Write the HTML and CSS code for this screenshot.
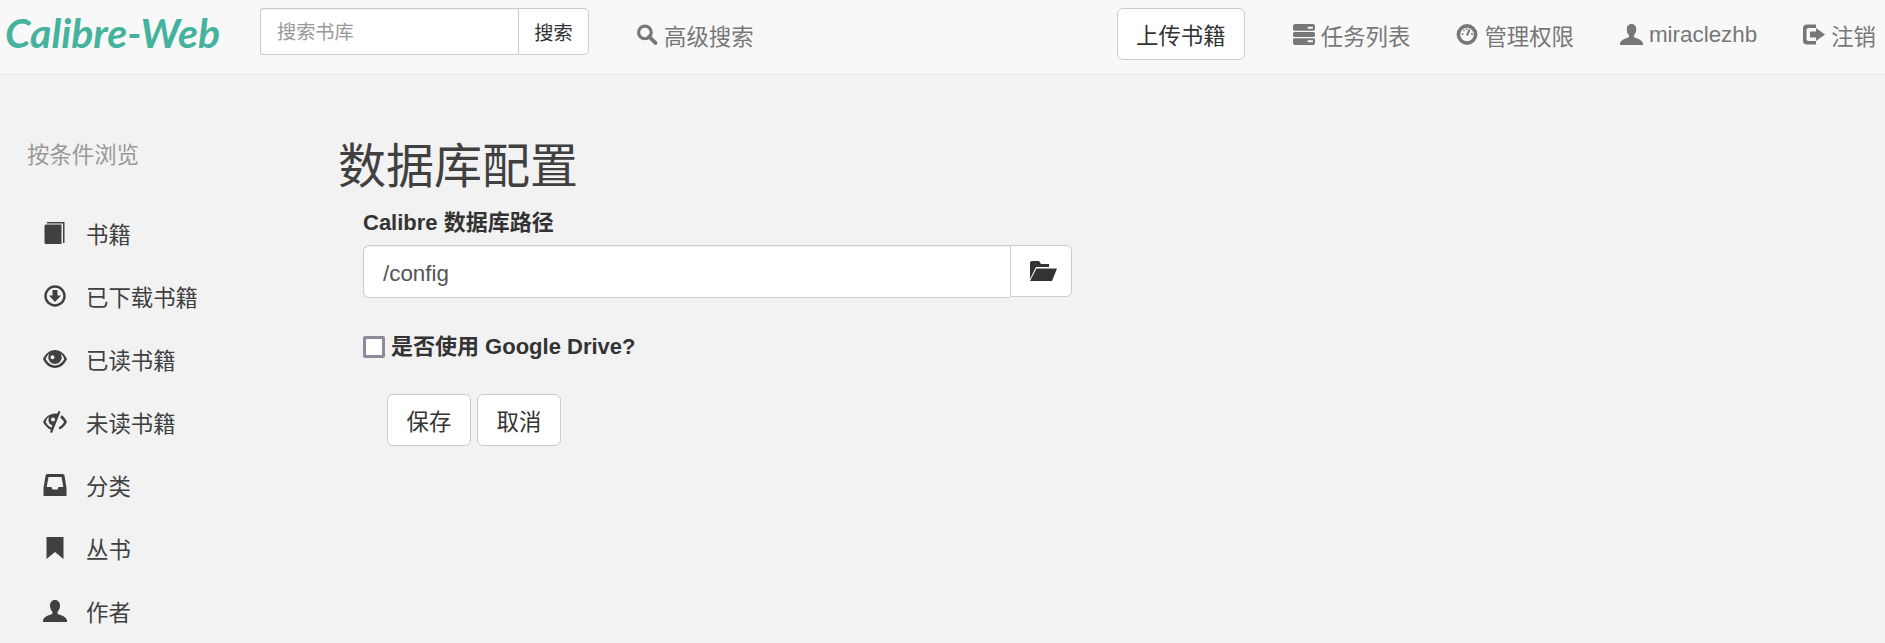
FILE: index.html
```html
<!DOCTYPE html>
<html lang="zh-CN">
<head>
    <meta charset="UTF-8">
    <title>Calibre-Web | 数据库配置</title>
    <link rel="stylesheet" href="styles.css">
</head>
<body>
    <header class="navbar">
        <a class="logo">Calibre-Web</a>
        <form class="search">
            <input class="search-input" type="text" placeholder="搜索书库">
            <button class="search-btn" type="button">搜索</button>
        </form>
        <a class="nav-link adv-search">
            <svg class="icon" viewBox="0 0 20 20"><circle cx="8" cy="8" r="6" fill="none" stroke="currentColor" stroke-width="3"/><path d="M12 12l6 6" stroke="currentColor" stroke-width="3.6" stroke-linecap="round"/></svg>
            高级搜索
        </a>
        <button class="upload-btn" type="button">上传书籍</button>
        <a class="nav-link">
            <svg class="icon" viewBox="0 0 21 20"><path fill="currentColor" d="M2 0h17a2 2 0 0 1 2 2v3a2 2 0 0 1-2 2H2a2 2 0 0 1-2-2V2a2 2 0 0 1 2-2zM2 7.500h17a1.500 1.500 0 0 1 0 5H2a1.500 1.500 0 0 1 0-5zM2 13h17a2 2 0 0 1 2 2v3a2 2 0 0 1-2 2H2a2 2 0 0 1-2-2v-3a2 2 0 0 1 2-2z"/><path fill="#f8f8f8" d="M0 6.500h21v1H0zM0 12.500h21v1H0zM14 2.500h5v2h-5zM14 15.500h5v2h-5z"/></svg>
            任务列表
        </a>
        <a class="nav-link">
            <svg class="icon" viewBox="0 0 21 21"><circle cx="10.500" cy="10.500" r="8.600" fill="none" stroke="currentColor" stroke-width="3.600"/><path d="M10.500 11.500l2.500-6" stroke="currentColor" stroke-width="2"/><path d="M5 10h2M14.500 10h2M7 6l1 1M10 4.500v1.500" stroke="currentColor" stroke-width="1.400"/></svg>
            管理权限
        </a>
        <a class="nav-link">
            <svg class="icon icon-user" viewBox="0 0 24 22"><path fill="currentColor" d="M12 0c3.300 0 5 2.500 5 5.500 0 2.600-1 4.800-2.400 6.200v2c2 1.200 8 2.300 9.400 6.300v2H0v-2c1.400-4 7.400-5.100 9.400-6.300v-2C8 10.300 7 8.100 7 5.500 7 2.500 8.700 0 12 0z"/></svg>
            miraclezhb
        </a>
        <a class="nav-link">
            <svg class="icon" viewBox="0 0 22 20"><path fill="currentColor" d="M4 0h9v3.500H5.500a2 2 0 0 0-2 2v9a2 2 0 0 0 2 2H13V20H4a4 4 0 0 1-4-4V4a4 4 0 0 1 4-4z"/><path fill="currentColor" d="M13 3.500l9 6.500-9 6.500V13H7V7h6z"/></svg>
            注销
        </a>
    </header>

    <div class="page">
        <nav class="sidebar">
            <div class="side-title">按条件浏览</div>
            <a class="side-item">
                <svg class="side-icon" viewBox="0 0 24 22"><path fill="currentColor" d="M1.500 4c0-1 1-1.500 2-1.500h15V22h-15c-1 0-2-.5-2-1.500z"/><path fill="currentColor" d="M4 0h17.500v21H20V1.500H4z"/></svg>
                书籍
            </a>
            <a class="side-item">
                <svg class="side-icon" viewBox="0 0 24 22"><circle cx="12" cy="11" r="9.500" fill="none" stroke="currentColor" stroke-width="2.400"/><path fill="currentColor" d="M9.500 5h5v5.500H18L12 17l-6-6.500h3.500z"/></svg>
                已下载书籍
            </a>
            <a class="side-item">
                <svg class="side-icon" viewBox="0 0 24 18"><path fill="currentColor" fill-rule="evenodd" d="M12 0c5.500 0 9.800 4 12 9-2.200 5-6.500 9-12 9S2.200 14 0 9c2.200-5 6.500-9 12-9zM6.500 3.200A12 12 0 0 0 2.700 9c1.800 3.400 5.200 6.500 9.300 6.500s7.500-3.100 9.300-6.500a12 12 0 0 0-3.800-5.800 6.800 6.800 0 1 1-11 0zM9.500 5.200a2 2 0 1 0 0 4 2 2 0 0 0 0-4z"/></svg>
                已读书籍
            </a>
            <a class="side-item">
                <svg class="side-icon" viewBox="0 0 24 22"><path fill="currentColor" fill-rule="evenodd" d="M15.500 0l2 .8L9 22l-2-.8.900-2.400C4.500 17.300 1.800 14.300 0 11c2.400-4.800 6.500-8.500 12-8.500.8 0 1.400.1 2.100.2zM6 5.500A11 11 0 0 0 2.700 11c1.100 2.200 2.900 4.300 5.800 5.700l.8-2.100C7 13.500 5.500 11.500 5.500 9.500 5.500 8 5.500 7 6 5.500zM10 6.500a2 2 0 1 0 0 4 2 2 0 0 0 0-4z"/><path fill="currentColor" d="M18.500 4.300c2.600 1.500 4.300 4 5.500 6.700-1.500 3.100-4 6-7.500 7.600l-.8-2.300c2.500-1.300 4.300-3.200 5.400-5.300-.9-1.800-2.200-3.200-3.800-4.300z"/></svg>
                未读书籍
            </a>
            <a class="side-item">
                <svg class="side-icon" viewBox="0 0 23 22"><path fill="currentColor" fill-rule="evenodd" d="M4 0h15c1.200 0 1.800.8 2.100 2L23 14v8H0v-8L2 2C2.200.8 2.800 0 4 0zM5 3L3.200 13H8l1 2.500h5l1-2.500h4.800L18 3z"/></svg>
                分类
            </a>
            <a class="side-item">
                <svg class="side-icon" viewBox="0 0 24 22"><path fill="currentColor" d="M3.500 0h17v22L12 15l-8.500 7z"/></svg>
                丛书
            </a>
            <a class="side-item">
                <svg class="side-icon" viewBox="0 0 24 22"><path fill="currentColor" d="M12 0c3.300 0 5 2.500 5 5.500 0 2.600-1 4.800-2.400 6.200v2c2 1.200 8 2.300 9.400 6.300v2H0v-2c1.400-4 7.400-5.100 9.400-6.300v-2C8 10.300 7 8.100 7 5.500 7 2.500 8.700 0 12 0z"/></svg>
                作者
            </a>
        </nav>

        <main class="content">
            <h2 class="page-title">数据库配置</h2>
            <form class="config-form">
                <label class="field-label">Calibre 数据库路径</label>
                <div class="path-group">
                    <input class="path-input" type="text" value="/config">
                    <button class="path-btn" type="button">
                        <svg class="folder" viewBox="0 0 28 20"><path fill="currentColor" d="M3 0h7l2 3h8v3H7L1 18V2a2 2 0 0 1 2-2zM7.500 7.500H28L23 20H1z"/></svg>
                    </button>
                </div>
                <label class="check-row">
                    <span class="check-box"></span>
                    是否使用 Google Drive?
                </label>
                <div class="actions">
                    <button class="btn" type="button">保存</button>
                    <button class="btn" type="button">取消</button>
                </div>
            </form>
        </main>
    </div>
</body>
</html>
```
FILE: styles.css
```css
* {
    box-sizing: border-box;
}
body {
    margin: 0;
    background-color: #f2f2f2;
    color: #404040;
    font-family: "Liberation Sans", "Noto Sans CJK SC", sans-serif;
    font-size: 22.4px;
    overflow: hidden;
}
.navbar {
    display: flex;
    align-items: flex-start;
    height: 75px;
    padding: 8px 9px 0 5px;
    background-color: #f8f8f8;
    border-bottom: 1px solid #e7e7e7;
}
.logo {
    width: 255px;
    color: #45b29d;
    font-family: "Lato", sans-serif;
    font-style: italic;
    font-weight: bold;
    font-size: 41px;
    line-height: 50px;
    white-space: nowrap;
}
.search {
    display: flex;
    height: 47px;
}
.search-input {
    width: 258px;
    padding: 3px 16px 0;
    border: 1px solid #ccc;
    border-right: 0;
    border-radius: 3px 0 0 3px;
    box-shadow: inset 0 1px 1px rgba(0, 0, 0, .075);
    font: inherit;
    font-size: 19.2px;
    color: #555;
}
.search-input::placeholder {
    color: #999;
}
.search-btn {
    width: 71px;
    padding: 0;
    background-color: #fff;
    border: 1px solid #ccc;
    border-radius: 0 5px 5px 0;
    font: inherit;
    font-size: 19.2px;
    color: #333;
}
.nav-link {
    display: flex;
    align-items: center;
    gap: 6px;
    height: 53px;
    margin-left: 46px;
    color: #777;
    white-space: nowrap;
}
.adv-search {
    margin-right: auto;
    margin-left: 47px;
}
.icon {
    width: 22px;
    height: 21px;
}
.icon-user {
    width: 23px;
}
.upload-btn {
    width: 128px;
    height: 52px;
    margin-right: 2px;
    padding: 0;
    background-color: #fff;
    border: 1px solid #ccc;
    border-radius: 6px;
    font: inherit;
    color: #333;
}
.page {
    display: flex;
}
.sidebar {
    width: 338px;
    padding: 66px 0 0 27px;
}
.side-title {
    height: 60px;
    color: #999;
    line-height: 30px;
}
.side-item {
    display: flex;
    align-items: center;
    gap: 19px;
    height: 63px;
    padding-left: 16px;
    color: #404040;
}
.side-icon {
    width: 24px;
    height: 22px;
    flex-shrink: 0;
}
.content {
    flex: 1;
}
.page-title {
    margin: 58px 0 0;
    font-size: 48px;
    font-weight: 400;
    line-height: 67px;
}
.config-form {
    padding: 0 0 0 25px;
}
.field-label {
    display: block;
    margin-top: 8px;
    font-size: 22px;
    font-weight: bold;
    color: #333;
    line-height: 30px;
}
.path-group {
    display: flex;
    align-items: flex-start;
    width: 709px;
    margin-top: 7px;
}
.path-input {
    width: 647px;
    height: 53px;
    padding: 4px 19px 0;
    border: 1px solid #ccc;
    border-right: 0;
    border-radius: 6px 0 0 6px;
    box-shadow: inset 0 1px 1px rgba(0, 0, 0, .075);
    font: inherit;
    color: #555;
}
.path-btn {
    display: flex;
    align-items: center;
    justify-content: center;
    width: 62px;
    height: 52px;
    padding: 0 0 0 3px;
    background-color: #fff;
    border: 1px solid #ccc;
    border-radius: 0 6px 6px 0;
    color: #333;
}
.folder {
    width: 28px;
    height: 20px;
}
.check-row {
    display: flex;
    align-items: center;
    gap: 6px;
    margin-top: 37px;
    font-size: 22px;
    font-weight: bold;
    color: #333;
    line-height: 24px;
}
.check-box {
    width: 22px;
    height: 22px;
    background-color: #fff;
    border: 3px solid #8d8b9b;
    border-radius: 2px;
}
.actions {
    display: flex;
    gap: 6px;
    margin-top: 35px;
    padding-left: 24px;
}
.btn {
    width: 84px;
    height: 52px;
    padding: 0;
    background-color: #fff;
    border: 1px solid #ccc;
    border-radius: 6px;
    font: inherit;
    color: #333;
}
```
